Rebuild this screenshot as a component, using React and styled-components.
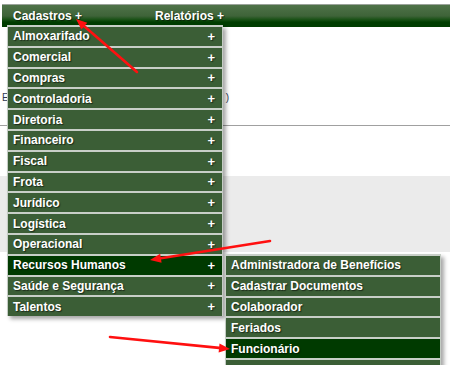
import React from "react";
import styled, { createGlobalStyle } from "styled-components";

const GlobalStyle = createGlobalStyle`
  html, body { margin: 0; padding: 0; background: #ffffff; }
  body { font-family: "Liberation Sans", Arial, sans-serif; }
`;

const Page = styled.div`
  position: relative;
  width: 450px;
  height: 365px;
  overflow: hidden;
  padding-top: 4px;
  box-sizing: border-box;
  background: #fff;
`;

const TopBar = styled.nav`
  display: flex;
  align-items: center;
  height: 22px;
  margin-left: 2px;
  padding-left: 11px;
  border-top: 1px solid #9aa39a;
  background: linear-gradient(
    to bottom,
    #4f7349 0%,
    #3e6338 50%,
    #154f12 68%,
    #003d00 78%,
    #003d00 100%
  );
`;

const NavItem = styled.span`
  width: ${(p) => p.$w}px;
  color: #fff;
  font-weight: bold;
  font-size: 12px;
  text-shadow: 1px 1px 1px rgba(0, 0, 0, 0.55);
  white-space: nowrap;
`;

const Content = styled.div`
  display: flex;
  flex-direction: column;
`;

const HeaderArea = styled.div`
  height: 98px;
  display: flex;
  align-items: flex-end;
  border-bottom: 1px solid #a0a0a0;
`;

const InfoRow = styled.div`
  width: 227px;
  margin: 0 0 22px 2px;
  display: flex;
  justify-content: space-between;
  font-size: 10px;
  color: #2b3a55;
`;

const WhiteGap = styled.div`
  height: 50px;
`;

const GreyBand = styled.div`
  height: 76px;
  background: #ebebeb;
`;

const Menu = styled.ul`
  position: absolute;
  top: ${(p) => p.$top}px;
  left: ${(p) => p.$left}px;
  width: 216px;
  margin: 0;
  padding: 0;
  list-style: none;
  box-shadow: 3px 3px 4px rgba(0, 0, 0, 0.35);
  border-left: 1px solid #c4ccc4;
  border-right: 1px solid #c4ccc4;
  box-sizing: border-box;
`;

const Item = styled.li`
  display: flex;
  align-items: center;
  justify-content: space-between;
  height: 18.8px;
  padding: 0 7px 0 5px;
  border-top: 2px solid #c8cfc8;
  background: ${(p) => (p.$active ? "#003a00" : "#3b5e36")};
  color: #fff;
  font-weight: bold;
  font-size: 12px;
  text-shadow: 1px 1px 1px rgba(0, 0, 0, 0.55);
  white-space: nowrap;
`;

const Plus = styled.span`
  font-size: 13px;
`;

const Arrows = styled.svg`
  position: absolute;
  inset: 0;
  pointer-events: none;
`;

const mainItems = [
  "Almoxarifado",
  "Comercial",
  "Compras",
  "Controladoria",
  "Diretoria",
  "Financeiro",
  "Fiscal",
  "Frota",
  "Jurídico",
  "Logística",
  "Operacional",
  "Recursos Humanos",
  "Saúde e Segurança",
  "Talentos",
];

const subItems = [
  "Administradora de Benefícios",
  "Cadastrar Documentos",
  "Colaborador",
  "Feriados",
  "Funcionário",
  "",
];

function Arrow({ x1, y1, x2, y2 }) {
  const dx = x2 - x1;
  const dy = y2 - y1;
  const len = Math.hypot(dx, dy);
  const ux = dx / len;
  const uy = dy / len;
  const hl = 11;
  const hw = 4.5;
  const bx = x2 - ux * hl;
  const by = y2 - uy * hl;
  const p1 = `${bx - uy * hw},${by + ux * hw}`;
  const p2 = `${bx + uy * hw},${by - ux * hw}`;
  return (
    <g>
      <line x1={x1} y1={y1} x2={bx} y2={by} stroke="#ff1010" strokeWidth="2.6" strokeLinecap="round" />
      <polygon points={`${x2},${y2} ${p1} ${p2}`} fill="#ff1010" />
    </g>
  );
}

export default function App() {
  return (
    <Page>
      <GlobalStyle />
      <TopBar>
        <NavItem $w={142}>Cadastros +</NavItem>
        <NavItem $w={100}>Relatórios +</NavItem>
      </TopBar>
      <Content>
        <HeaderArea>
          <InfoRow>
            <span>E</span>
            <span>)</span>
          </InfoRow>
        </HeaderArea>
        <WhiteGap />
        <GreyBand />
      </Content>

      <Menu $top={25} $left={7}>
        {mainItems.map((t) => (
          <Item key={t} $active={t === "Recursos Humanos"}>
            <span>{t}</span>
            <Plus>+</Plus>
          </Item>
        ))}
      </Menu>

      <Menu $top={254} $left={225}>
        {subItems.map((t, i) => (
          <Item key={i} $active={t === "Funcionário"}>
            <span>{t}</span>
          </Item>
        ))}
      </Menu>

      <Arrows width="450" height="365" viewBox="0 0 450 365">
        <Arrow x1={137} y1={72} x2={76} y2={19} />
        <Arrow x1={270} y1={241} x2={150} y2={260} />
        <Arrow x1={110} y1={337} x2={230} y2={349} />
      </Arrows>
    </Page>
  );
}
